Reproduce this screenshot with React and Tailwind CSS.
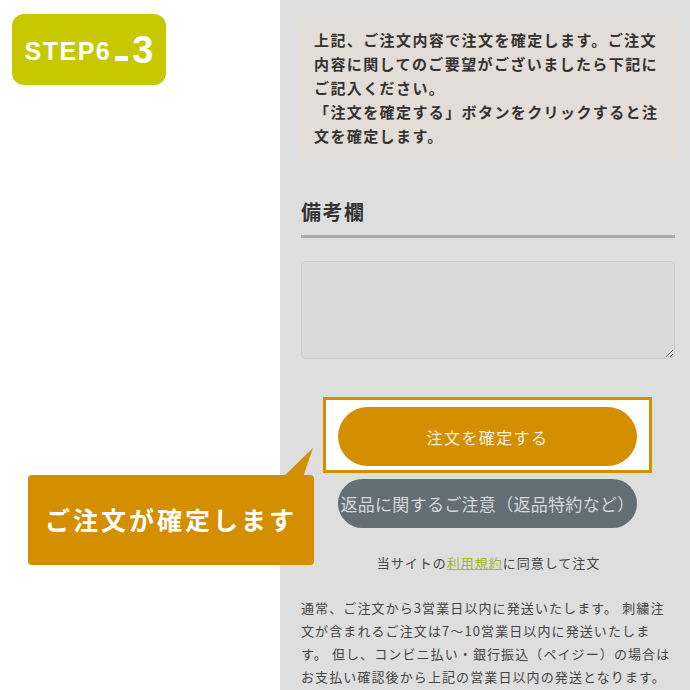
import React from 'react';

const jp = { fontFamily: '"Noto Sans CJK JP", "Noto Sans", sans-serif' };

const App = () => {
  return (
    <div className="relative flex h-[690px] w-[690px] overflow-hidden bg-white text-[#333]" style={jp}>
      {/* Left blank column */}
      <div className="w-[280px] shrink-0 bg-white" />

      {/* Order panel */}
      <div className="flex-1 bg-[#dedede] pl-[21px] pr-[14px] pt-[17px]">
        <div className="mr-[1px] rounded-[5px] bg-[#e2ddd6] px-[13px] pt-[11px] pb-[12px] text-[15px] font-bold leading-[24px] tracking-[1.4px] text-[#333]">
          上記、ご注文内容で注文を確定します。ご注文内容に関してのご要望がございましたら下記にご記入ください。
          <br />
          「注文を確定する」ボタンをクリックすると注文を確定します。
        </div>

        <h2 className="mr-[1px] mt-[38px] border-b-[3px] border-[#a9a9a9] pb-[9px] text-[20px] font-bold leading-[28px] tracking-[1.5px] text-[#333]">
          備考欄
        </h2>

        <textarea className="mt-[23px] block h-[98px] w-[374px] resize-y rounded-[5px] border border-[#cdcdcd] bg-[#d9d9d9]" />

        <div className="mt-[38px] ml-[22px] w-[329px] border-[3px] border-[#d48f00] bg-white px-[12px] pt-[7px] pb-[4px]">
          <button className="flex h-[59px] w-full items-center justify-center rounded-full bg-[#d48f00] text-[16px] leading-none tracking-[1.4px] text-[#f4ecdc]">
            注文を確定する
          </button>
        </div>

        <button className="ml-[37px] mt-[6px] flex h-[49px] w-[299px] items-center justify-center whitespace-nowrap rounded-full bg-[#636f75] text-[17px] leading-none tracking-[0.3px] text-[#d4d8da]">
          返品に関するご注意（返品特約など）
        </button>

        <p className="mt-[25px] text-center text-[13px] leading-[20px] tracking-[1px] text-[#444]">
          当サイトの<span className="text-[#9fb81c] underline">利用規約</span>に同意して注文
        </p>

        <p className="mt-[23px] text-[13px] leading-[23px] tracking-[1.1px] text-[#444]">
          通常、ご注文から3営業日以内に発送いたします。 刺繍注文が含まれるご注文は7〜10営業日以内に発送いたします。 但し、コンビニ払い・銀行振込（ペイジー）の場合はお支払い確認後から上記の営業日以内の発送となります。
        </p>
      </div>

      {/* Step badge */}
      <div className="absolute left-[12px] top-[14px] flex h-[71px] w-[154px] items-center justify-center rounded-[12px] bg-[#c8c800] text-white" style={{ fontFamily: '"Liberation Sans", Arial, sans-serif' }}>
        <span className="mt-[4px] text-[25px] font-bold tracking-[1.5px]">STEP6</span>
        <span className="mx-[4px] mt-[18px] inline-block h-[5px] w-[13px] bg-white" />
        <span className="text-[38px] font-bold leading-none">3</span>
      </div>

      {/* Callout */}
      <div className="absolute left-[28px] top-[475px] flex h-[90px] w-[286px] items-center justify-center rounded-[4px] bg-[#d48f00] text-[25px] font-bold tracking-[3px] text-white">
        ご注文が確定します
      </div>
      <svg className="absolute left-[283px] top-[448px]" width="31" height="29" viewBox="0 0 31 29">
        <polygon points="0,29 20,29 30,0" fill="#d48f00" />
      </svg>
    </div>
  );
};

export default App;
